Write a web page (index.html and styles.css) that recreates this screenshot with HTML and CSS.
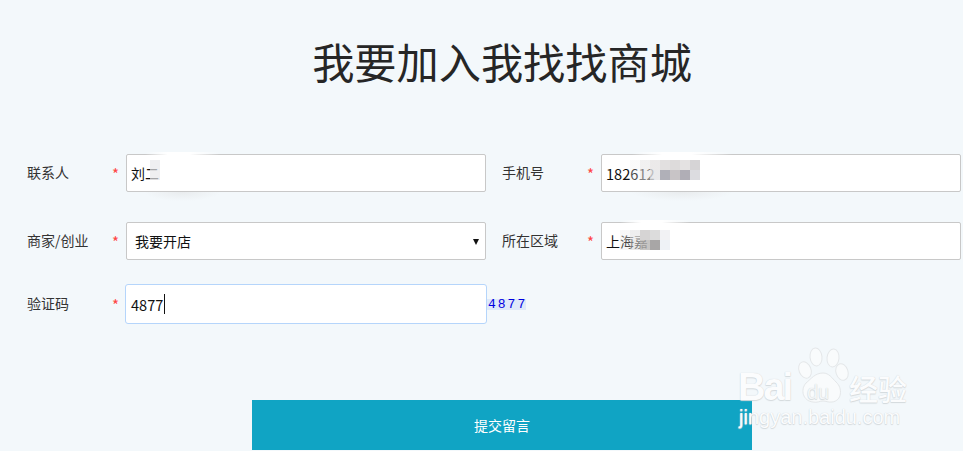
FILE: index.html
```html
<!DOCTYPE html>
<html lang="zh-CN">
<head>
<meta charset="utf-8">
<title>我要加入我找找商城</title>
<link rel="stylesheet" href="styles.css">
</head>
<body>
<main class="page">
  <h1 class="title">我要加入我找找商城</h1>
  <form class="form">
    <div class="row">
      <div class="field">
        <span class="label">联系人</span><span class="star">*</span>
        <div class="control"><span class="value">刘二</span><i class="halo halo-name"></i><i class="mosaic mosaic-name"></i></div>
      </div>
      <div class="field">
        <span class="label">手机号</span><span class="star">*</span>
        <div class="control"><span class="value num">182612</span><i class="halo halo-phone"></i><i class="mosaic mosaic-phone"></i></div>
      </div>
    </div>
    <div class="row">
      <div class="field">
        <span class="label">商家/创业</span><span class="star">*</span>
        <div class="control select"><span class="value">我要开店</span><span class="arrow"></span></div>
      </div>
      <div class="field">
        <span class="label">所在区域</span><span class="star">*</span>
        <div class="control"><span class="value">上海嘉</span><i class="halo halo-area"></i><i class="mosaic mosaic-area"></i></div>
      </div>
    </div>
    <div class="row row-code">
      <div class="field">
        <span class="label">验证码</span><span class="star">*</span>
        <div class="control focused"><span class="value num">4877</span><span class="caret"></span></div>
        <span class="captcha">4877</span>
      </div>
    </div>
    <div class="actions"><div class="submit">提交留言</div></div>
  </form>
</main>
<div class="watermark">
  <svg class="paw" viewBox="0 0 56 60" width="56" height="60" aria-hidden="true">
    <g fill="#f9fbfc" stroke="#e4e7e9" stroke-width="1">
      <ellipse cx="8" cy="24" rx="6" ry="8.5" transform="rotate(-22 8 24)"/>
      <ellipse cx="19" cy="11" rx="6" ry="9" transform="rotate(-6 19 11)"/>
      <ellipse cx="36" cy="12" rx="6" ry="9" transform="rotate(6 36 12)"/>
      <ellipse cx="45" cy="26" rx="6" ry="8.5" transform="rotate(-18 45 26)"/>
      <path d="M26 27c6 0 9 5 13 9 7 6 6 19-4 20-4 .5-6-1-9-1s-6 2-10 1C6 55 3 44 9 37c5-4 9-10 17-10z"/>
    </g>
  </svg>
  <span class="wm-bai">Bai</span><span class="wm-du">du</span><span class="wm-jy">经验</span>
  <span class="wm-url">jingyan.baidu.com</span>
</div>
</body>
</html>
```
FILE: styles.css
```css
* { box-sizing: border-box; }
html, body { margin: 0; height: 451px; overflow: hidden; }
body {
  background: #f3f8fb;
  font-family: "Noto Sans CJK SC", "Noto Sans", sans-serif;
  color: #333;
  position: relative;
}
.page { width: 963px; }
.title {
  margin: 0;
  padding: 33px 0 0 41px;
  height: 154px;
  text-align: center;
  font-size: 42.2px;
  line-height: 56px;
  font-weight: 400;
  color: #262626;
}
.form { padding-left: 27px; }
.row { display: flex; gap: 16px; height: 38px; margin-bottom: 30px; }
.row-code { margin-top: -6px; height: 40px; margin-bottom: 76px; }
.field { display: flex; align-items: center; width: 459px; flex: none; }
.label { width: 85px; flex: none; font-size: 14px; line-height: 18px; margin-top: -2px; color: #333; }
.star { width: 14px; flex: none; color: #f44; font-size: 15px; line-height: 14px; margin-top: 2px; }
.control {
  position: relative;
  width: 360px;
  height: 38px;
  flex: none;
  display: flex;
  align-items: center;
  padding-left: 4px;
  background: #fff;
  border: 1px solid #c8c8c8;
  border-radius: 2px;
  font-size: 14px;
  color: #111;
}
.num { font-size: 14.6px; }
.select { padding-left: 8px; }
.arrow {
  position: absolute;
  right: 6px;
  top: 16px;
  border-left: 3.5px solid transparent;
  border-right: 3.5px solid transparent;
  border-top: 6px solid #111;
}
.focused {
  width: 362px;
  height: 40px;
  margin-left: -1px;
  padding-left: 5px;
  border-color: #b5d5fb;
  border-radius: 3px;
}
.caret { width: 1px; height: 20px; margin-left: 1px; background: #111; }
.captcha {
  flex: none;
  width: 39px;
  height: 11px;
  padding-left: 1px;
  background: #dfe9f9;
  color: #0000e0;
  font-family: "Liberation Mono", monospace;
  font-size: 13px;
  line-height: 11px;
  letter-spacing: 2px;
  white-space: nowrap;
}
.mosaic { position: absolute; display: block; }
.mosaic-name { left: 23px; top: 5px; width: 10px; height: 20px; background: #e8e8eab0; }
.mosaic-phone {
  left: 28px;
  top: 5px;
  width: 70px;
  height: 20px;
  background:
    linear-gradient(90deg, #eeeeee44 0 10px, #e6e4e488 10px 20px, #e6e4e4cc 20px 30px, #e2e0e0 30px 40px, #dddbdb 40px 50px, #e4e2e2 50px 60px, #d6d4d6 60px 70px) top / 100% 50% no-repeat,
    linear-gradient(90deg, #ebebec44 0 10px, #e4e4e688 10px 20px, #e4e4e6cc 20px 30px, #b0b0b8 30px 40px, #c8c4c6 40px 50px, #b0aeb6 50px 60px, #dcdce0 60px 70px) bottom / 100% 50% no-repeat;
}
.mosaic-area {
  left: 18px;
  top: 7px;
  width: 50px;
  height: 20px;
  background:
    linear-gradient(90deg, #eeeeee66 0 10px, #e6e6e6aa 10px 20px, #d6d4d4 20px 30px, #dcdcdc 30px 40px, #f2f2f4 40px 50px) top / 100% 50% no-repeat,
    linear-gradient(90deg, #dedcdc44 0 10px, #d6d4d488 10px 20px, #b8b6b4cc 20px 30px, #a8a6a6 30px 40px, #eef2f6 40px 50px) bottom / 100% 50% no-repeat;
}
.halo { position: absolute; display: block; top: -1px; height: 38px; pointer-events: none; }
.halo::before {
  content: "";
  position: absolute;
  left: 0;
  right: 0;
  top: -2px;
  height: 7px;
  background: linear-gradient(90deg, #fff0, #fff 30%, #fff 60%, #fff0);
}
.halo::after {
  content: "";
  position: absolute;
  left: 0;
  right: 0;
  top: 38px;
  height: 9px;
  background: radial-gradient(ellipse at center top, #e9ecee, #f3f8fb00 72%);
}
.halo-name { left: 18px; width: 75px; }
.halo-phone { left: 30px; width: 100px; }
.halo-area { left: 18px; width: 70px; }
.halo-area::after { display: none; }
.actions { padding-left: 225px; }
.submit {
  width: 500px;
  height: 50px;
  background: #10a4c4;
  color: #fff;
  font-size: 14px;
  text-align: center;
  line-height: 50px;
}
.watermark {
  position: absolute;
  left: 738px;
  top: 346px;
  width: 180px;
  height: 90px;
  color: #fbfcfd;
  font-family: "Liberation Sans", sans-serif;
}
.paw { position: absolute; left: 59px; top: 0; }
.watermark span { position: absolute; text-shadow: 0 0 1px #c9cfd3, 0 1px 1px #d5dadd; white-space: nowrap; }
.wm-bai { left: 0; top: 22px; font-size: 38px; line-height: 38px; font-weight: 700; letter-spacing: -2px; }
.wm-du { left: 69px; top: 35px; font-size: 20px; line-height: 22px; color: #f3f6f8; }
.wm-jy { left: 111px; top: 25px; font-family: "Noto Sans CJK SC", sans-serif; font-size: 29px; line-height: 34px; font-weight: 500; }
.wm-url { left: 1px; top: 59px; font-size: 20px; line-height: 24px; }
```
